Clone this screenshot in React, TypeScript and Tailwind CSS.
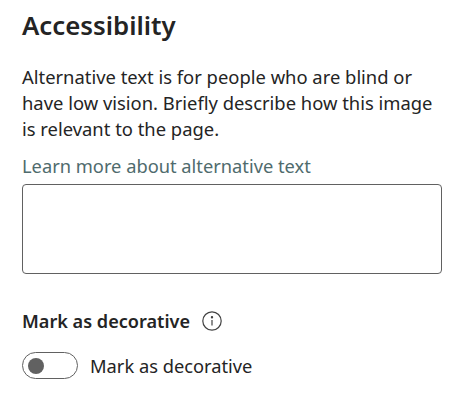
export default function App() {
  return (
    <div className="h-[404px] w-[468px] overflow-hidden bg-white pl-[22px] pt-[9px] text-[#242424] [font-family:'Noto_Sans',sans-serif]">
      <h2 className="text-[25.8px] leading-[32px] font-semibold">Accessibility</h2>
      <p className="mt-[23px] w-[420px] text-[18.4px] leading-[26px]">
        Alternative text is for people who are blind or have low vision. Briefly describe how this image is relevant to the page.
      </p>
      <a className="mt-[12px] block text-[18.3px] leading-[24px] text-[#4f6b6d]" href="#">
        Learn more about alternative text
      </a>
      <textarea className="mt-[6px] block h-[90px] w-[420px] resize-none rounded-[4px] border border-[#616161] bg-white" />
      <div className="mt-[35px] flex items-center gap-[12px]">
        <span className="text-[18.1px] leading-[24px] font-semibold">Mark as decorative</span>
        <svg width="20" height="20" viewBox="0 0 20 20" fill="none" stroke="#424242" strokeWidth="1.2">
          <circle cx="10" cy="10" r="9.2" />
          <path d="M10 9v5.5" />
          <circle cx="10" cy="6.2" r="0.6" fill="#424242" />
        </svg>
      </div>
      <div className="mt-[19px] flex items-center gap-[12px]">
        <div className="flex h-[27px] w-[56px] items-center rounded-full border border-[#616161] pl-[5px]">
          <div className="h-[16px] w-[16px] rounded-full bg-[#616161]" />
        </div>
        <span className="text-[18.3px] leading-[24px]">Mark as decorative</span>
      </div>
    </div>
  );
}
